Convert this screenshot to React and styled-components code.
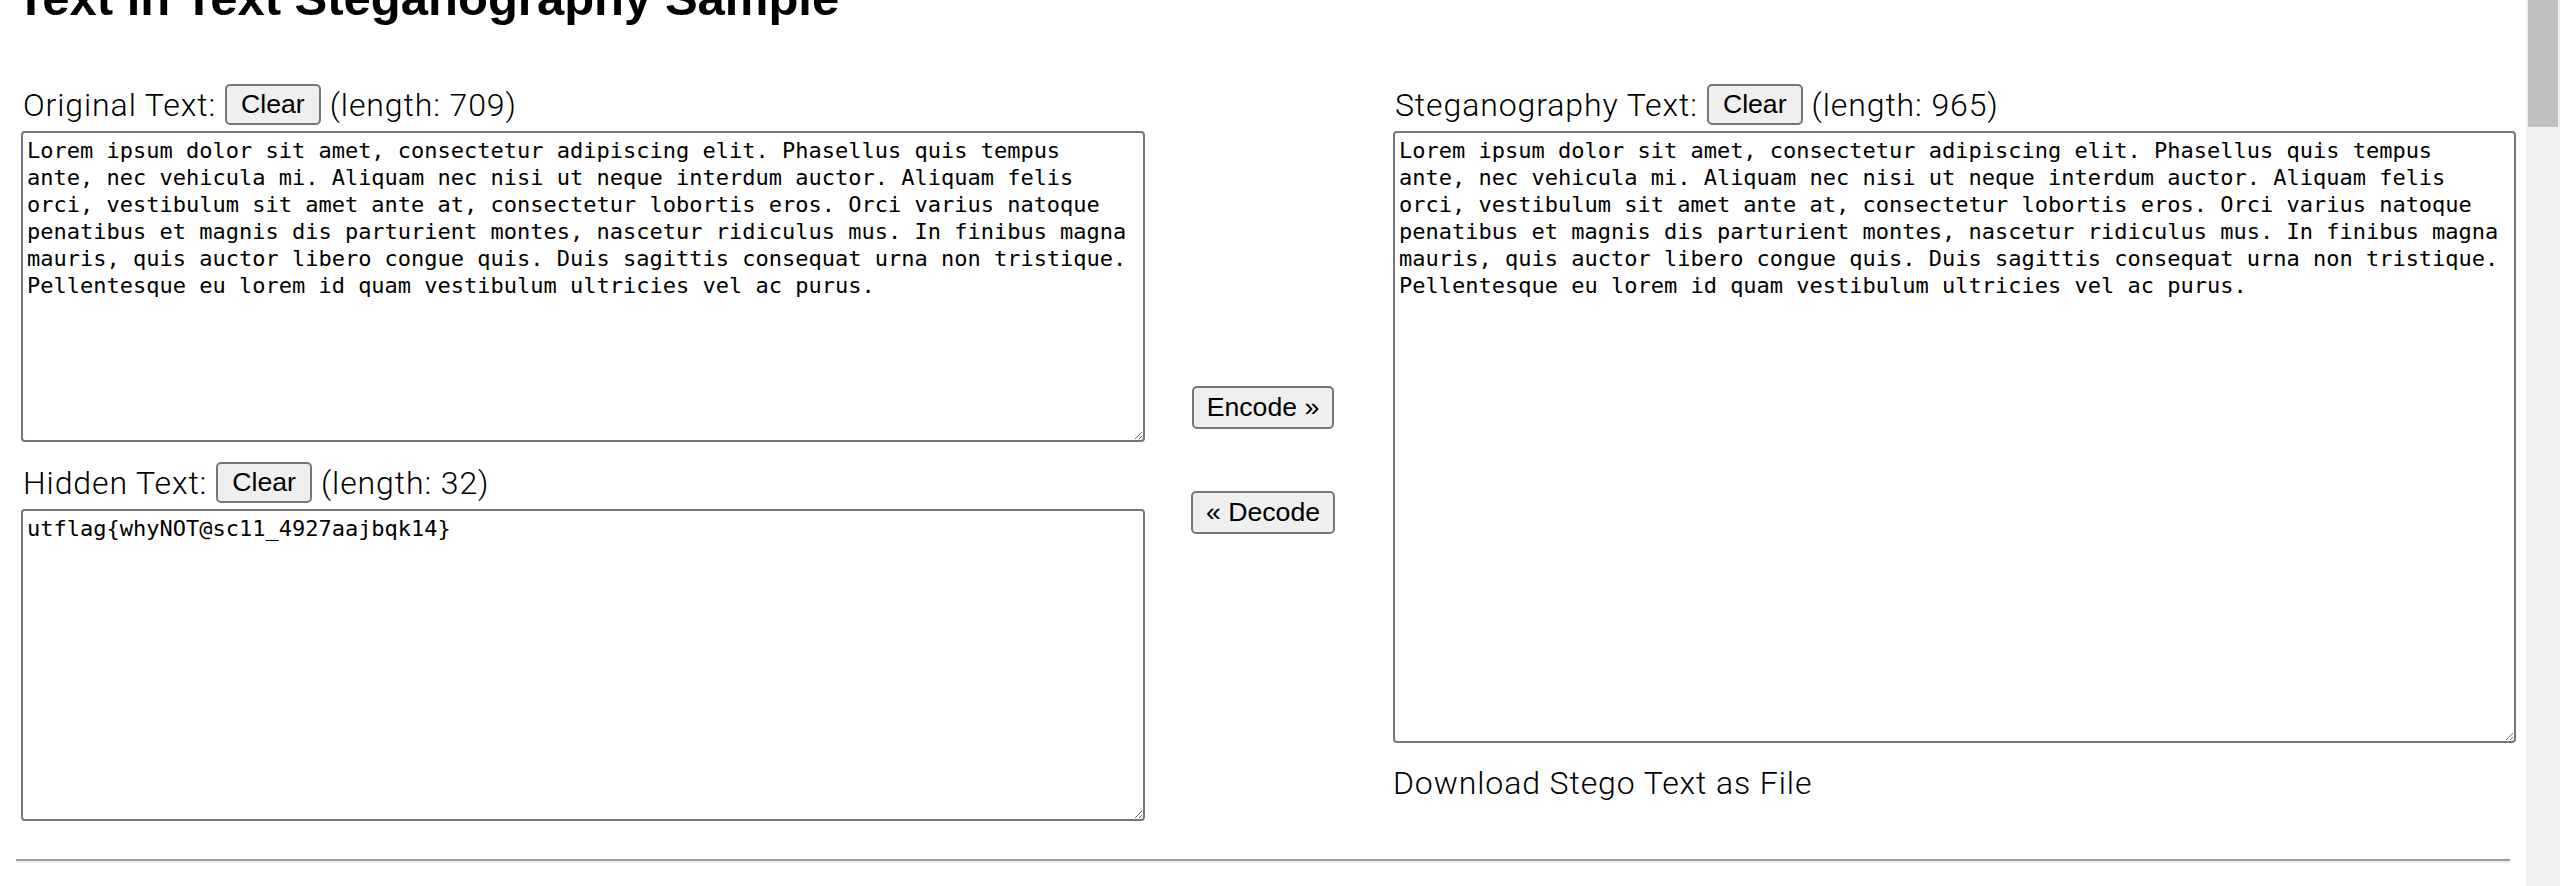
import React, { useLayoutEffect, useRef } from "react";
import styled, { createGlobalStyle } from "styled-components";

const LOREM =
  "Lorem ipsum dolor sit amet, consectetur adipiscing elit. Phasellus quis tempus ante, nec vehicula mi. Aliquam nec nisi ut neque interdum auctor. Aliquam felis orci, vestibulum sit amet ante at, consectetur lobortis eros. Orci varius natoque penatibus et magnis dis parturient montes, nascetur ridiculus mus. In finibus magna mauris, quis auctor libero congue quis. Duis sagittis consequat urna non tristique. Pellentesque eu lorem id quam vestibulum ultricies vel ac purus.";

const HIDDEN = "utflag{whyNOT@sc11_4927aajbqk14}";

const GlobalStyle = createGlobalStyle`
  html, body {
    margin: 0;
    padding: 0;
    overflow: hidden;
    background: #fff;
  }
  body {
    font-family: Roboto, "Liberation Sans", Arial, sans-serif;
    color: #000;
  }
`;

const Window = styled.div`
  display: flex;
  height: 100vh;
`;

const Scroller = styled.div`
  flex: 1;
  min-width: 0;
  overflow-y: scroll;
  overflow-x: hidden;
  scrollbar-width: none;

  &::-webkit-scrollbar {
    display: none;
  }
`;

const ScrollTrack = styled.div`
  flex: 0 0 34px;
  display: flex;
  flex-direction: column;
  background: #f1f1f1;
`;

const ScrollThumb = styled.div`
  height: 127px;
  margin: 0 2px;
  background: #c1c1c1;
`;

const Page = styled.main`
  padding: 0 16px;
  min-height: 6181px;
  box-sizing: border-box;
`;

const Title = styled.h1`
  margin: 30px 0 0;
  font: bold 49px/56px "Liberation Sans", Arial, sans-serif;
`;

const Workspace = styled.div`
  display: grid;
  grid-template-columns: 1124px 248px 1123px;
  align-items: start;
  margin: 60px 0 0 5px;
`;

const Column = styled.div`
  display: flex;
  flex-direction: column;
`;

const Actions = styled.div`
  align-self: stretch;
  display: flex;
  flex-direction: column;
  align-items: center;
  justify-content: center;
  gap: 62px;
  padding: 12px 12px 0 0;
`;

const Field = styled.div`
  display: flex;
  flex-direction: column;
  & + & {
    margin-top: 22px;
  }
`;

const LabelRow = styled.div`
  box-sizing: border-box;
  display: flex;
  align-items: center;
  gap: 9px;
  height: 42px;
  margin-bottom: 3px;
  padding: 0 0 5px 2px;
  font-size: 32px;
  font-weight: 300;
  letter-spacing: 0.9px;
  white-space: nowrap;
`;

const Button = styled.button`
  box-sizing: border-box;
  font-family: "Liberation Sans", Arial, sans-serif;
  font-size: 26.67px;
  line-height: normal;
  letter-spacing: 0;
  color: #000;
  background: #efefef;
  border: 2px solid #767676;
  border-radius: 5px;
  padding: ${(p) => (p.$big ? "4px 13px" : "3px 14px")};
  cursor: pointer;
`;

const TextBox = styled.textarea`
  display: block;
  box-sizing: border-box;
  width: 100%;
  height: ${(p) => p.$h}px;
  margin: 0;
  padding: 4px;
  border: 2px solid #767676;
  border-radius: 4px;
  font: 22px/27px "DejaVu Sans Mono", "Liberation Mono", monospace;
  color: #000;
  background: #fff;
  outline: none;
`;

const DownloadLink = styled.div`
  margin-top: 22px;
  font-size: 32px;
  font-weight: 300;
  letter-spacing: 0.9px;
  line-height: 37px;
  color: #000;
`;

const Rule = styled.hr`
  margin: 38px 0 0;
  height: 0;
  border: 0;
  border-top: 2px solid #9a9a9a;
  border-bottom: 2px solid #eeeeee;
`;

function TextField({ label, length, value, height }) {
  return (
    <Field>
      <LabelRow>
        <span>{label}:</span>
        <Button type="button">Clear</Button>
        <span>(length: {length})</span>
      </LabelRow>
      <TextBox $h={height} defaultValue={value} spellCheck={false} />
    </Field>
  );
}

export default function App() {
  const scroller = useRef(null);

  useLayoutEffect(() => {
    if (scroller.current) scroller.current.scrollTop = 60;
  }, []);

  return (
    <Window>
      <GlobalStyle />
      <Scroller ref={scroller}>
        <Page>
          <Title>Text in Text Steganography Sample</Title>
          <Workspace>
            <Column>
              <TextField label="Original Text" length={709} value={LOREM} height={311} />
              <TextField label="Hidden Text" length={32} value={HIDDEN} height={312} />
            </Column>
            <Actions>
              <Button $big type="button">Encode »</Button>
              <Button $big type="button">« Decode</Button>
            </Actions>
            <Column>
              <TextField label="Steganography Text" length={965} value={LOREM} height={612} />
              <DownloadLink>Download Stego Text as File</DownloadLink>
            </Column>
          </Workspace>
          <Rule />
        </Page>
      </Scroller>
      <ScrollTrack>
        <ScrollThumb />
      </ScrollTrack>
    </Window>
  );
}
